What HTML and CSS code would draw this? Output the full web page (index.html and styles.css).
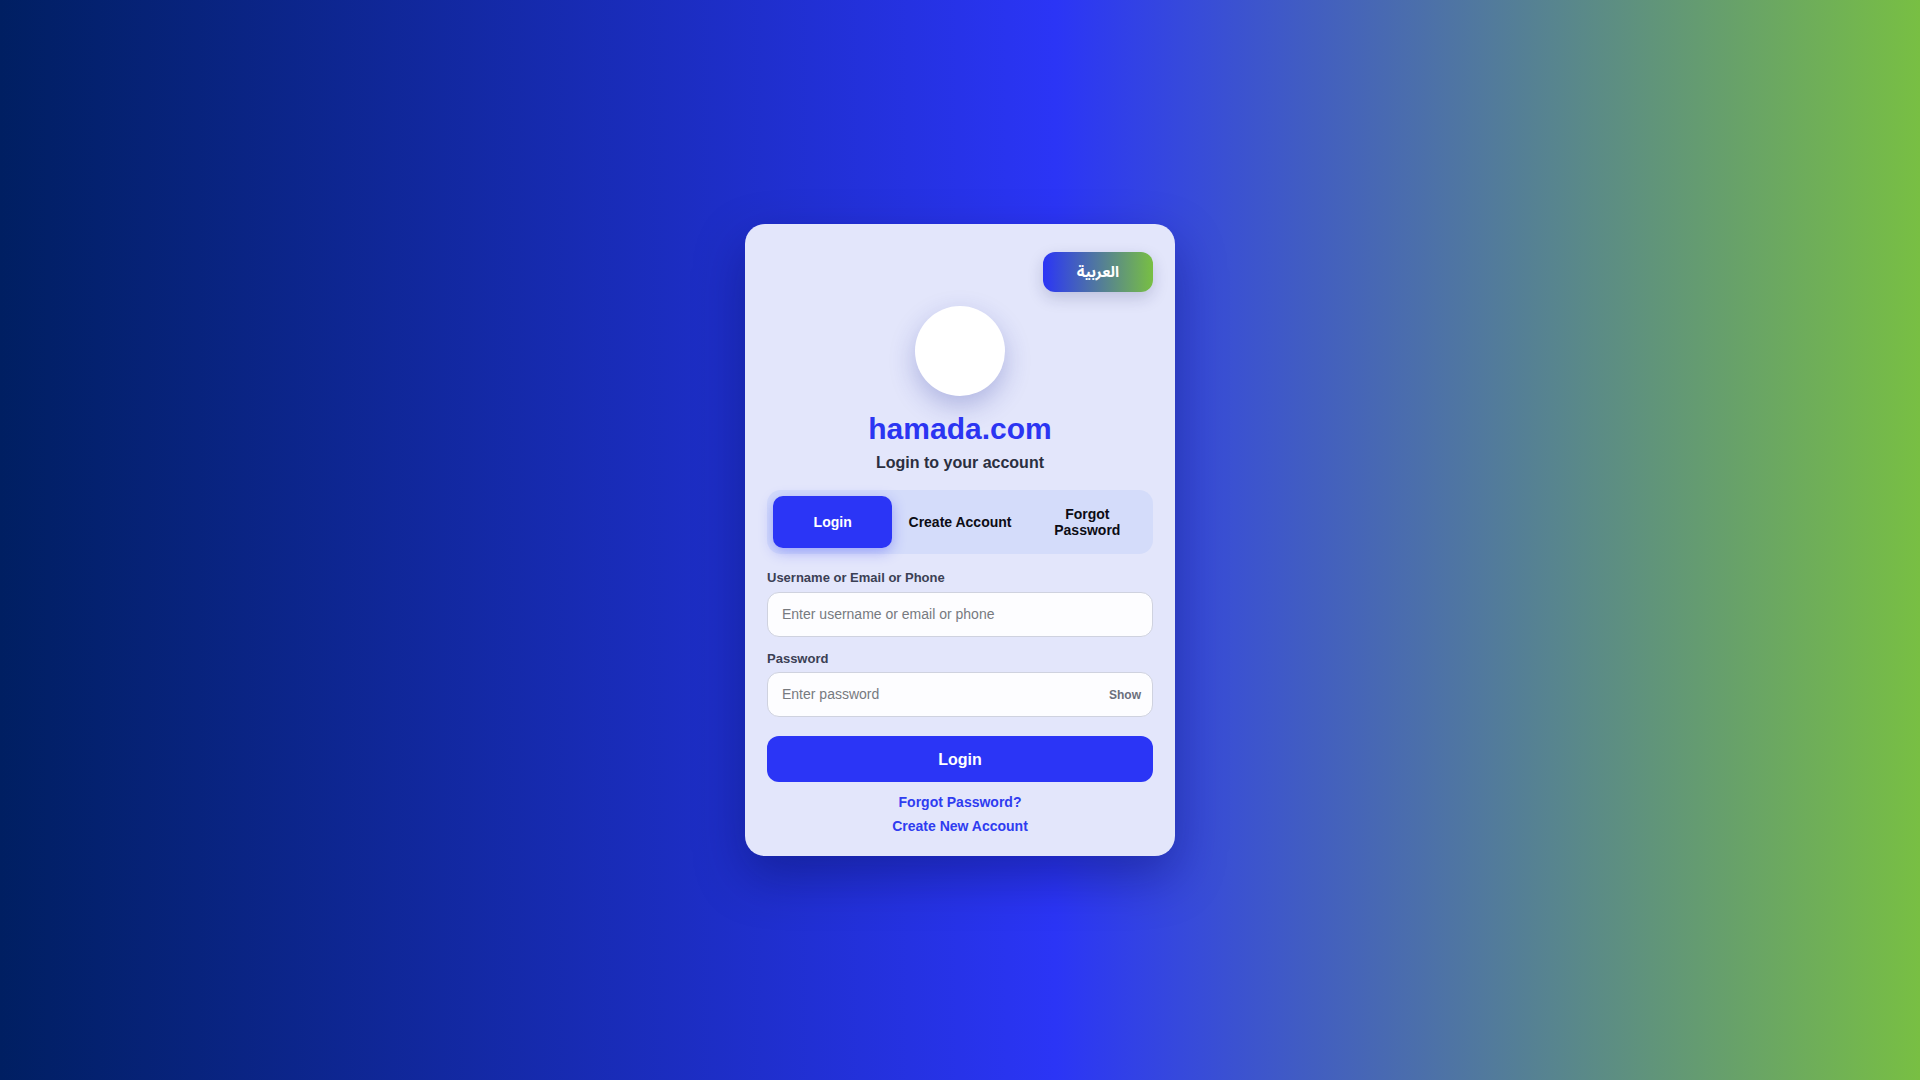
FILE: index.html
```html
<!DOCTYPE html>
<html lang="en">
<head>
<meta charset="utf-8">
<title>hamada.com - Login</title>
<link rel="stylesheet" href="styles.css">
</head>
<body>
<main class="card">
  <div class="lang-row">
    <button class="lang-btn" type="button" lang="ar" dir="rtl">العربية</button>
  </div>
  <div class="avatar"></div>
  <h1 class="brand">hamada.com</h1>
  <p class="subtitle">Login to your account</p>
  <nav class="tabs">
    <button class="tab active" type="button">Login</button>
    <button class="tab" type="button">Create Account</button>
    <button class="tab" type="button">Forgot Password</button>
  </nav>
  <form class="form">
    <label class="label" for="user">Username or Email or Phone</label>
    <input class="input" id="user" type="text" placeholder="Enter username or email or phone">
    <label class="label label-pass" for="pass">Password</label>
    <div class="pass-wrap">
      <input class="input" id="pass" type="password" placeholder="Enter password">
      <button class="show-btn" type="button">Show</button>
    </div>
    <button class="submit" type="button">Login</button>
  </form>
  <div class="links">
    <a class="link" href="#">Forgot Password?</a>
    <a class="link" href="#">Create New Account</a>
  </div>
</main>
</body>
</html>
```
FILE: styles.css
```css
* { box-sizing: border-box; }

html, body { height: 100%; }

body {
  margin: 0;
  min-height: 100vh;
  display: flex;
  align-items: center;
  justify-content: center;
  font-family: "Liberation Sans", Arial, sans-serif;
  background: linear-gradient(90deg, #001f62 0%, #2b35f6 55%, #78bf43 100%);
}

.card {
  width: 430px;
  padding: 28px 22px 18px;
  background: #e3e6fb;
  border-radius: 20px;
  box-shadow: 0 20px 50px rgba(0, 10, 60, 0.35);
  display: flex;
  flex-direction: column;
}

.lang-row {
  display: flex;
  justify-content: flex-end;
}

.lang-btn {
  width: 110px;
  height: 40px;
  border: none;
  border-radius: 12px;
  background: linear-gradient(90deg, #2b35f6 0%, #78bf43 100%);
  color: #ffffff;
  font-family: "Noto Sans Arabic", "Noto Naskh Arabic", "Noto Sans", "DejaVu Sans", sans-serif;
  font-weight: bold;
  font-size: 15px;
  box-shadow: 0 6px 16px rgba(20, 30, 90, 0.18);
  cursor: pointer;
}

.avatar {
  width: 90px;
  height: 90px;
  border-radius: 50%;
  background: #ffffff;
  margin: 14px auto 16px;
  box-shadow: 0 10px 26px rgba(43, 53, 160, 0.28);
}

.brand {
  margin: 0;
  text-align: center;
  font-size: 30px;
  line-height: 34px;
  font-weight: bold;
  color: #2b35f2;
}

.subtitle {
  margin: 8px 0 0;
  text-align: center;
  font-size: 16px;
  line-height: 18px;
  font-weight: bold;
  color: #2b2f40;
}

.tabs {
  margin-top: 18px;
  display: grid;
  grid-template-columns: 1fr 1fr 1fr;
  gap: 8px;
  padding: 6px;
  background: #d4dcfa;
  border-radius: 14px;
}

.tab {
  min-height: 52px;
  padding: 10px 6px;
  border: none;
  border-radius: 10px;
  background: transparent;
  color: #0c0c14;
  font-family: "Liberation Sans", Arial, sans-serif;
  font-size: 14px;
  line-height: 16px;
  font-weight: bold;
  cursor: pointer;
}

.tab.active {
  background: #2b35f6;
  color: #ffffff;
  box-shadow: 0 4px 14px rgba(43, 53, 246, 0.35);
}

.form {
  display: flex;
  flex-direction: column;
  margin-top: 16px;
}

.label {
  font-size: 13px;
  line-height: 15px;
  font-weight: bold;
  color: #3b4054;
  margin-bottom: 7px;
}

.label-pass { margin-top: 14px; margin-bottom: 6px; }

.input {
  width: 100%;
  height: 45px;
  padding: 0 14px 1px;
  border: 1px solid #cfd2df;
  border-radius: 12px;
  background: #fdfdff;
  font-family: "Liberation Sans", Arial, sans-serif;
  font-size: 14px;
  color: #222;
  outline: none;
}

.input::placeholder { color: #777a80; }

.pass-wrap { position: relative; }

.pass-wrap .input { padding-right: 60px; }

.show-btn {
  position: absolute;
  right: 12px;
  top: 50%;
  transform: translateY(-50%);
  border: none;
  background: transparent;
  padding: 0;
  font-family: "Liberation Sans", Arial, sans-serif;
  font-size: 12px;
  font-weight: bold;
  color: #6b6f7c;
  cursor: pointer;
}

.submit {
  margin-top: 19px;
  height: 46px;
  padding-top: 2px;
  border: none;
  border-radius: 12px;
  background: #2b35f6;
  color: #ffffff;
  font-family: "Liberation Sans", Arial, sans-serif;
  font-size: 16px;
  font-weight: bold;
  cursor: pointer;
}

.links {
  margin-top: 8px;
  display: flex;
  flex-direction: column;
  align-items: center;
}

.link {
  font-size: 14px;
  line-height: 24px;
  font-weight: bold;
  color: #2f3cf0;
  text-decoration: none;
}
```
